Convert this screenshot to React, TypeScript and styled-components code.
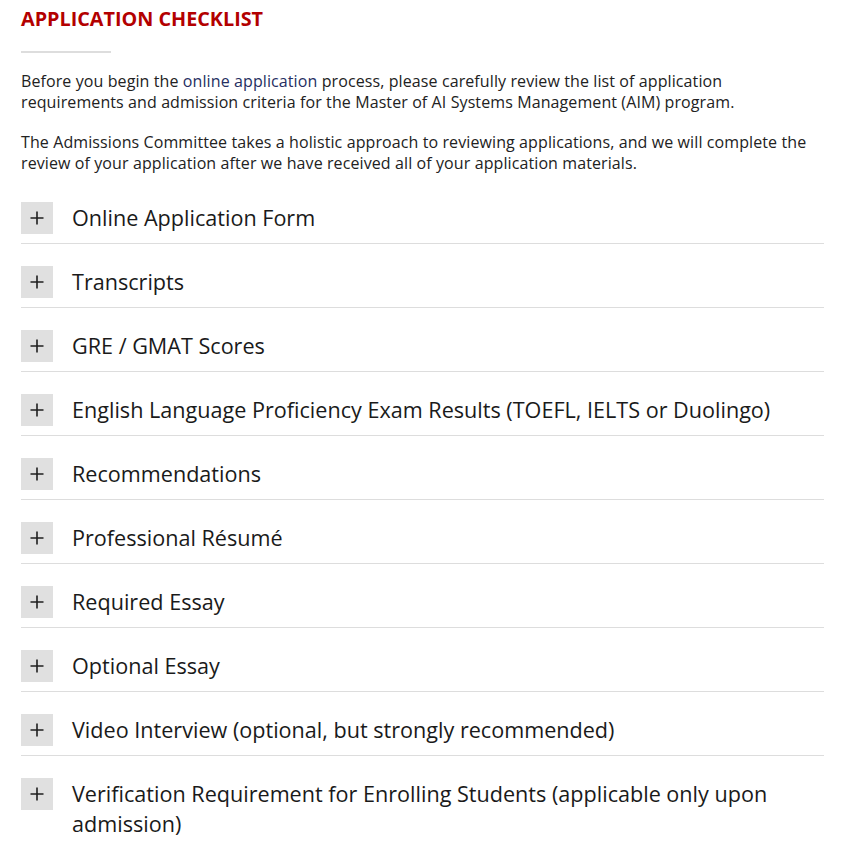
import React from "react";
import styled, { createGlobalStyle } from "styled-components";

const GlobalStyle = createGlobalStyle`
  html, body {
    margin: 0;
    padding: 0;
    background: #ffffff;
  }
  body {
    font-family: "Open Sans", "Noto Sans", sans-serif;
    color: #222222;
    -webkit-font-smoothing: antialiased;
  }
  * { box-sizing: border-box; }
`;

const Page = styled.main`
  width: 845px;
  padding: 4px 21px 0 21px;
`;

const Section = styled.section`
  width: 803px;
`;

const Heading = styled.h2`
  margin: 0;
  font-size: 19.8px;
  line-height: 30px;
  font-weight: 700;
  color: #b30000;
  text-transform: uppercase;
`;

const Rule = styled.hr`
  width: 90px;
  height: 2px;
  border: 0;
  margin: 17px 0 18px 0;
  background: #dddddd;
`;

const Paragraph = styled.p`
  margin: 0 0 19px 0;
  font-size: 16px;
  line-height: 21px;
  letter-spacing: 0.1px;
  color: #222222;

  &:last-of-type {
    margin-bottom: 0;
  }
`;

const Link = styled.a`
  color: #262f62;
  text-decoration: none;
`;

const List = styled.ul`
  list-style: none;
  margin: 6px 0 0 0;
  padding: 0;
`;

const Item = styled.li`
  display: flex;
  align-items: flex-start;
  gap: 19px;
  padding: 22px 0 9px 0;
  border-bottom: 1px solid #dddddd;

  &:last-child {
    border-bottom: none;
  }
`;

const Toggle = styled.span`
  flex: 0 0 32px;
  width: 32px;
  height: 32px;
  background: #e0e0e0;
  display: flex;
  align-items: center;
  justify-content: center;
`;

const Label = styled.span`
  padding-top: 1px;
  font-size: 21.6px;
  line-height: 30px;
  color: #1a1a1a;
`;

const PlusIcon = () => (
  <svg width="16" height="16" viewBox="0 0 16 16" aria-hidden="true">
    <path d="M8 1.5v13M1.5 8h13" stroke="#1f1f1f" strokeWidth="1.6" fill="none" />
  </svg>
);

const items = [
  "Online Application Form",
  "Transcripts",
  "GRE / GMAT Scores",
  "English Language Proficiency Exam Results (TOEFL, IELTS or Duolingo)",
  "Recommendations",
  "Professional Résumé",
  "Required Essay",
  "Optional Essay",
  "Video Interview (optional, but strongly recommended)",
  "Verification Requirement for Enrolling Students (applicable only upon admission)",
];

export default function App() {
  return (
    <>
      <GlobalStyle />
      <Page>
        <Section>
          <Heading>Application Checklist</Heading>
          <Rule />
          <Paragraph>
            Before you begin the <Link href="#">online application</Link> process, please
            carefully review the list of application requirements and admission criteria for
            the Master of AI Systems Management (AIM) program.
          </Paragraph>
          <Paragraph>
            The Admissions Committee takes a holistic approach to reviewing applications, and we
            will complete the review of your application after we have received all of your
            application materials.
          </Paragraph>
          <List>
            {items.map((label) => (
              <Item key={label}>
                <Toggle>
                  <PlusIcon />
                </Toggle>
                <Label>{label}</Label>
              </Item>
            ))}
          </List>
        </Section>
      </Page>
    </>
  );
}
